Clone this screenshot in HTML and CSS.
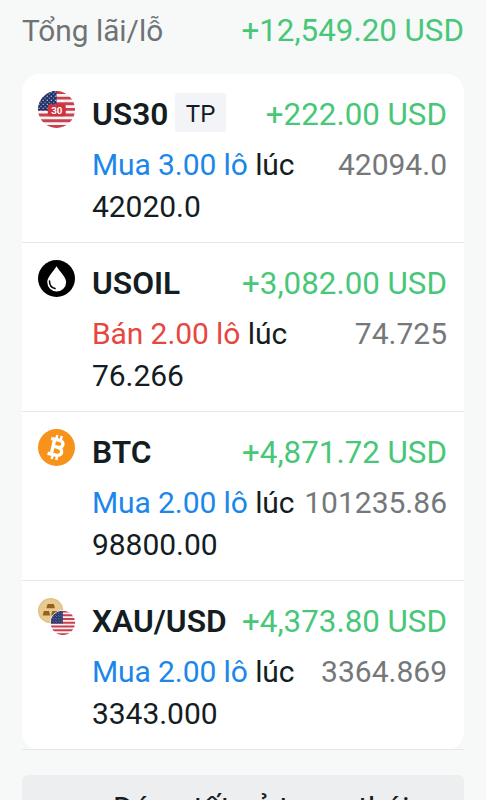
FILE: index.html
```html
<!DOCTYPE html>
<html lang="vi">
<head>
    <meta charset="UTF-8">
    <meta name="viewport" content="width=device-width, initial-scale=1.0">
    <title>Tổng lãi/lỗ</title>
    <link rel="stylesheet" href="styles.css">
</head>
<body>
    <div class="total">
        <span class="total-label">Tổng lãi/lỗ</span>
        <span class="profit">+12,549.20 USD</span>
    </div>

    <div class="positions">
        <div class="position">
            <svg class="icon" viewBox="0 0 36 36">
                <defs>
                    <clipPath id="circle"><circle cx="18" cy="18" r="18"/></clipPath>
                    <pattern id="stars" width="4" height="4" patternUnits="userSpaceOnUse">
                        <rect width="4" height="4" fill="#1d2f68"/>
                        <circle cx="1" cy="1" r=".65" fill="#dfe5f2"/>
                        <circle cx="3" cy="3" r=".65" fill="#dfe5f2"/>
                    </pattern>
                    <g id="flag" clip-path="url(#circle)">
                        <rect width="36" height="36" fill="#fbf3f3"/>
                        <path d="M0 1.4h36M0 6.9h36M0 12.4h36M0 17.9h36M0 23.4h36M0 28.9h36M0 34.6h36" stroke="#c8414e" stroke-width="2.8"/>
                        <rect width="18" height="19" fill="url(#stars)"/>
                    </g>
                </defs>
                <use href="#flag"/>
                <rect x="9.5" y="13" width="17.5" height="11.5" rx="2" fill="#cd3440"/>
                <text class="icon-text" x="18.3" y="22.2">30</text>
            </svg>
            <div class="info">
                <div class="row top">
                    <div class="name">US30 <span class="tag">TP</span></div>
                    <span class="profit">+222.00 USD</span>
                </div>
                <div class="row">
                    <div class="order"><span class="buy">Mua 3.00 lô</span> lúc<br>42020.0</div>
                    <span class="price">42094.0</span>
                </div>
            </div>
        </div>

        <div class="position">
            <svg class="icon" viewBox="0 0 36 36">
                <circle cx="18" cy="18" r="18" fill="#000"/>
                <path d="M18 6C15 11 9 16.500 9 21.500a9.200 9.200 0 0 0 18.400 0C27.400 16.500 21 11 18 6z" fill="#fff"/>
                <path d="M11.200 20.500c0 4 2.200 6.700 5.400 7.300" fill="none" stroke="#000" stroke-width="1.500" stroke-linecap="round"/>
            </svg>
            <div class="info">
                <div class="row top">
                    <div class="name">USOIL</div>
                    <span class="profit">+3,082.00 USD</span>
                </div>
                <div class="row">
                    <div class="order"><span class="sell">Bán 2.00 lô</span> lúc<br>76.266</div>
                    <span class="price">74.725</span>
                </div>
            </div>
        </div>

        <div class="position">
            <svg class="icon" viewBox="0 0 36 36">
                <circle cx="18" cy="18" r="18" fill="#f7931a"/>
                <g transform="rotate(13 18 18)" fill="none" stroke="#fff">
                    <path d="M14.500 10v16M11 10.600h8.500c5.200 0 5.200 6.900 0 6.900h-5M19 17.500c6.500 0 6.500 7.900 0 7.900h-8.200" stroke-width="3.300"/>
                    <path d="M16 6v4M20.500 6v4M16 26v4M20.500 26v4" stroke-width="2.400"/>
                </g>
            </svg>
            <div class="info">
                <div class="row top">
                    <div class="name">BTC</div>
                    <span class="profit">+4,871.72 USD</span>
                </div>
                <div class="row">
                    <div class="order"><span class="buy">Mua 2.00 lô</span> lúc<br>98800.00</div>
                    <span class="price">101235.86</span>
                </div>
            </div>
        </div>

        <div class="position">
            <svg class="icon" viewBox="0 0 36 36">
                <circle cx="12.300" cy="12.300" r="12.300" fill="#e3c385"/>
                <circle cx="12.300" cy="12.300" r="10.800" fill="#e8cb92"/>
                <path d="M9.300 5.800h6l1.200 4.200H8.100zM5.600 12.600h5.200l1 4.400H4.600zM13.800 12.600H19l1 4.400h-7.300z" fill="#97601f"/>
                <circle cx="24.300" cy="24.300" r="12.600" fill="#fff"/>
                <use href="#flag" transform="translate(12.300 12.300) scale(.66)"/>
            </svg>
            <div class="info">
                <div class="row top">
                    <div class="name">XAU/USD</div>
                    <span class="profit">+4,373.80 USD</span>
                </div>
                <div class="row">
                    <div class="order"><span class="buy">Mua 2.00 lô</span> lúc<br>3343.000</div>
                    <span class="price">3364.869</span>
                </div>
            </div>
        </div>
    </div>

    <button class="close-all">Đóng tất cả trạng thái</button>
</body>
</html>
```
FILE: styles.css
```css
body {
    margin: 0;
    padding: 10px 22px 0;
    height: 800px;
    box-sizing: border-box;
    overflow: hidden;
    background: #f7f9f9;
    font-family: Roboto, "Noto Sans", sans-serif;
    font-size: 30px;
    line-height: 42px;
    color: #141d22;
}

.total {
    display: flex;
    justify-content: space-between;
    height: 42px;
    margin-bottom: 22px;
}

.total-label {
    color: #6f7376;
    font-size: 29.8px;
}

.profit {
    color: #48c778;
    font-size: 31.3px;
    white-space: nowrap;
}

.positions {
    background: #fff;
    border-radius: 18px;
}

.position {
    display: flex;
    height: 169px;
    padding: 20px 17px 0 16px;
    box-sizing: border-box;
    border-bottom: 1px solid #e6e8e9;
}

.icon {
    width: 37px;
    height: 37px;
    margin: -3px 17px 0 0;
    flex-shrink: 0;
}

.icon-text {
    font-size: 9.5px;
    font-weight: 700;
    fill: #fff;
    text-anchor: middle;
}

.info {
    flex: 1;
    min-width: 0;
}

.row {
    display: flex;
    justify-content: space-between;
    white-space: nowrap;
}

.top {
    height: 42px;
    margin-bottom: 8px;
    line-height: 41px;
}

.name {
    display: flex;
    gap: 7px;
    font-size: 31.7px;
    font-weight: 600;
}

.tag {
    height: 39px;
    margin-top: -1px;
    padding: 0 10.5px;
    background: #f3f4f7;
    border-radius: 3px;
    font-size: 24px;
    font-weight: 400;
    line-height: 42px;
}

.order {
    letter-spacing: -0.05px;
}

.buy {
    color: #1b87ea;
    letter-spacing: -0.1px;
}

.sell {
    color: #e5483f;
    letter-spacing: -0.1px;
}

.price {
    color: #75787a;
}

.close-all {
    display: block;
    width: 100%;
    height: 67px;
    margin-top: 25px;
    padding: 0 0 0 36px;
    border: 0;
    border-radius: 6px;
    background: #edeeef;
    color: #141d22;
    font: inherit;
    font-size: 31px;
}
```
